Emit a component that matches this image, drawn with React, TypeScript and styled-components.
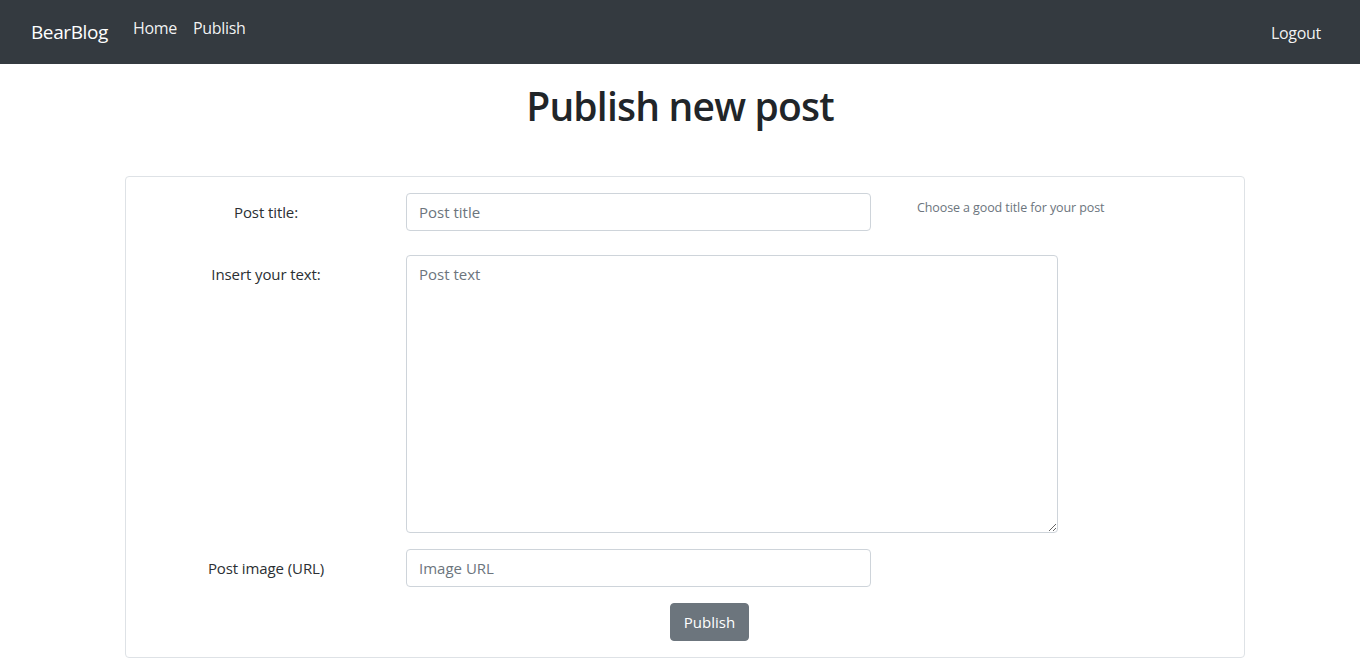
import React, { useState } from 'react';
import styled, { createGlobalStyle } from 'styled-components';

const GlobalStyle = createGlobalStyle`
    * { box-sizing: border-box; }
    body {
        margin: 0;
        font-family: "Open Sans", "Noto Sans", "Liberation Sans", sans-serif;
        font-size: 16px;
        color: #212529;
        background: #fff;
    }
`;

const Navbar = styled.nav`
    height: 64px;
    background: #343a40;
    display: flex;
    align-items: center;
    padding: 0 39px 0 31px;
`;

const Brand = styled.a`
    color: #fff;
    font-size: 19px;
    margin-right: 17px;
    text-decoration: none;
    letter-spacing: -0.4px;
`;

const NavList = styled.div`
    display: flex;
    align-self: flex-start;
    margin-top: 16px;
`;

const NavLink = styled.a`
    color: rgba(255, 255, 255, 0.95);
    font-size: 16px;
    padding: 0 8px;
    text-decoration: none;
    line-height: 24px;
    letter-spacing: -0.3px;
`;

const Spacer = styled.div`
    flex: 1;
`;

const LogoutLink = styled(NavLink)`
    padding: 0 0 0 8px;
    margin-top: 1px;
`;

const Title = styled.h1`
    margin: 18px 0 46px;
    text-align: center;
    font-size: 39px;
    font-weight: 600;
    line-height: 48px;
    letter-spacing: -0.8px;
`;

const CardWrap = styled.div`
    padding-left: 10px;
`;

const Card = styled.form`
    margin: 0 auto;
    width: 1120px;
    border: 1px solid #dee2e6;
    border-radius: 4px;
    padding: 16px 0 16px;
`;

const FormRow = styled.div<{ $gap: number }>`
    display: grid;
    grid-template-columns: 280px 465px 1fr;
    margin-bottom: ${(p) => p.$gap}px;
`;

const WideRow = styled(FormRow)`
    grid-template-columns: 280px 652px 1fr;
`;

const Label = styled.label`
    text-align: center;
    padding-top: 7px;
    line-height: 24px;
    font-size: 15px;
    letter-spacing: -0.1px;
    color: #2b2f33;
`;

const Input = styled.input`
    height: 38px;
    width: 100%;
    padding: 6px 12px;
    border: 1px solid #ced4da;
    border-radius: 4px;
    font: inherit;
    font-size: 15px;
    line-height: 24px;
    color: #495057;
    &::placeholder { color: #6c757d; }
`;

const TextArea = styled.textarea`
    height: 278px;
    width: 100%;
    padding: 6px 12px;
    border: 1px solid #ced4da;
    border-radius: 4px;
    font: inherit;
    font-size: 15px;
    line-height: 24px;
    color: #495057;
    resize: vertical;
    &::placeholder { color: #6c757d; }
`;

const Help = styled.small`
    padding: 6px 0 0 46px;
    font-size: 12.5px;
    color: #6c757d;
    letter-spacing: -0.1px;
`;

const Actions = styled.div`
    display: flex;
    justify-content: center;
    padding-left: 49px;
`;

const Button = styled.button`
    height: 38px;
    padding: 0 13px;
    background: #6c757d;
    color: #fff;
    border: 1px solid #6c757d;
    border-radius: 4px;
    font: inherit;
    font-size: 15px;
    cursor: pointer;
`;

export default function App() {
    const [post, setPost] = useState({ title: '', text: '', image: '' });

    return (
        <>
            <GlobalStyle />
            <Navbar>
                <Brand href="#">BearBlog</Brand>
                <NavList>
                    <NavLink href="#">Home</NavLink>
                    <NavLink href="#">Publish</NavLink>
                </NavList>
                <Spacer />
                <LogoutLink href="#">Logout</LogoutLink>
            </Navbar>
            <Title>Publish new post</Title>
            <CardWrap>
                <Card onSubmit={(e) => e.preventDefault()}>
                    <FormRow $gap={24}>
                        <Label htmlFor="title">Post title:</Label>
                        <Input
                            id="title"
                            placeholder="Post title"
                            value={post.title}
                            onChange={(e) => setPost({ ...post, title: e.target.value })}
                        />
                        <Help>Choose a good title for your post</Help>
                    </FormRow>
                    <WideRow $gap={16}>
                        <Label htmlFor="text">Insert your text:</Label>
                        <TextArea
                            id="text"
                            placeholder="Post text"
                            value={post.text}
                            onChange={(e) => setPost({ ...post, text: e.target.value })}
                        />
                    </WideRow>
                    <FormRow $gap={16}>
                        <Label htmlFor="image">Post image (URL)</Label>
                        <Input
                            id="image"
                            placeholder="Image URL"
                            value={post.image}
                            onChange={(e) => setPost({ ...post, image: e.target.value })}
                        />
                    </FormRow>
                    <Actions>
                        <Button type="submit">Publish</Button>
                    </Actions>
                </Card>
            </CardWrap>
        </>
    );
}
